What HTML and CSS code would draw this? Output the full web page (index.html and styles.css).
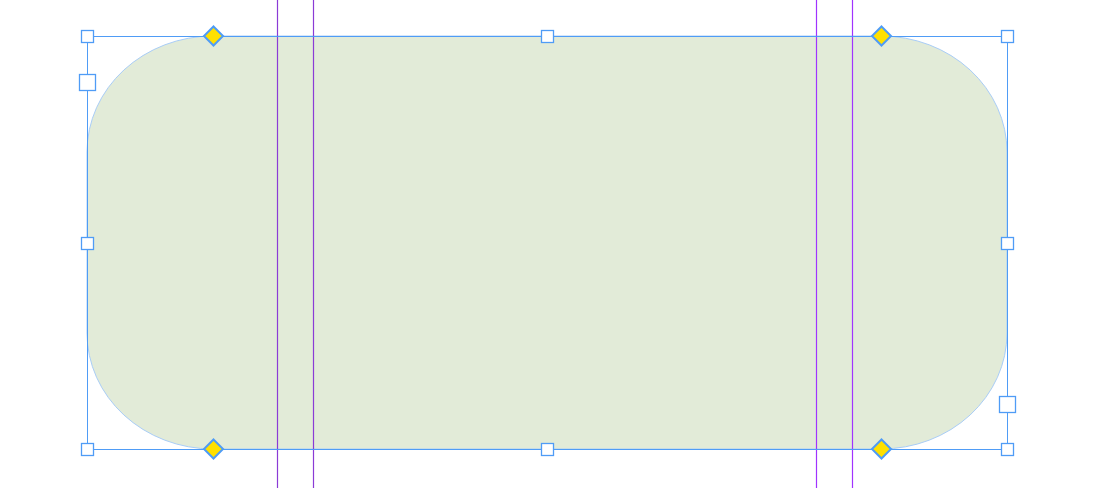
FILE: index.html
```
<!DOCTYPE html>
<html>
<head>
<meta charset="utf-8">
<title>Shape editor</title>
<link rel="stylesheet" href="styles.css">
</head>
<body>
<div class="canvas">
<svg class="stage" width="1094" height="488" viewBox="0 0 1094 488" xmlns="http://www.w3.org/2000/svg">
  <path class="shape" d="M213 36 H881 A126 116 0 0 1 1007 152 V333 A126 116 0 0 1 881 449 H213 A126 116 0 0 1 87 333 V152 A126 116 0 0 1 213 36 Z"/>
  <line class="guide guide-dark" x1="277.5" y1="0" x2="277.5" y2="488"/>
  <line class="guide guide-dark" x1="313.5" y1="0" x2="313.5" y2="488"/>
  <line class="guide" x1="816.5" y1="0" x2="816.5" y2="488"/>
  <line class="guide" x1="852.5" y1="0" x2="852.5" y2="488"/>
  <rect class="bbox" x="87.5" y="36.5" width="920" height="413"/>
  <rect class="handle" x="81.5" y="30.5" width="12" height="12"/>
  <rect class="handle" x="541.5" y="30.5" width="12" height="12"/>
  <rect class="handle" x="1001.5" y="30.5" width="12" height="12"/>
  <rect class="handle" x="81.5" y="237.5" width="12" height="12"/>
  <rect class="handle" x="1001.5" y="237.5" width="12" height="12"/>
  <rect class="handle" x="81.5" y="443.5" width="12" height="12"/>
  <rect class="handle" x="541.5" y="443.5" width="12" height="12"/>
  <rect class="handle" x="1001.5" y="443.5" width="12" height="12"/>
  <rect class="handle" x="79.5" y="74.5" width="16" height="16"/>
  <rect class="handle" x="999.5" y="396.5" width="16" height="16"/>
  <path class="diamond" d="M213.5 26.5 L223 36 L213.5 45.5 L204 36 Z"/>
  <path class="diamond" d="M881.5 26.5 L891 36 L881.5 45.5 L872 36 Z"/>
  <path class="diamond" d="M213.5 439.5 L223 449 L213.5 458.5 L204 449 Z"/>
  <path class="diamond" d="M881.5 439.5 L891 449 L881.5 458.5 L872 449 Z"/>
</svg>
</div>
</body>
</html>
```
FILE: styles.css
```
html, body {
  margin: 0;
  padding: 0;
  background: #ffffff;
  font-family: "Liberation Sans", Arial, sans-serif;
}
.canvas {
  position: relative;
  width: 1094px;
  height: 488px;
  overflow: hidden;
}
.stage {
  display: block;
}
.shape {
  fill: #e2ebd8;
  stroke: #a9cdf7;
  stroke-width: 1;
}
.guide {
  stroke: #a033ff;
  stroke-width: 1.2;
}
.guide-dark {
  stroke: #8b3bd6;
}
.bbox {
  fill: none;
  stroke: #4f9cf6;
  stroke-width: 1;
}
.handle {
  fill: #ffffff;
  stroke: #4f9cf6;
  stroke-width: 1.3;
}
.diamond {
  fill: #ffe000;
  stroke: #4f9cf6;
  stroke-width: 2;
  stroke-linejoin: miter;
}
```
